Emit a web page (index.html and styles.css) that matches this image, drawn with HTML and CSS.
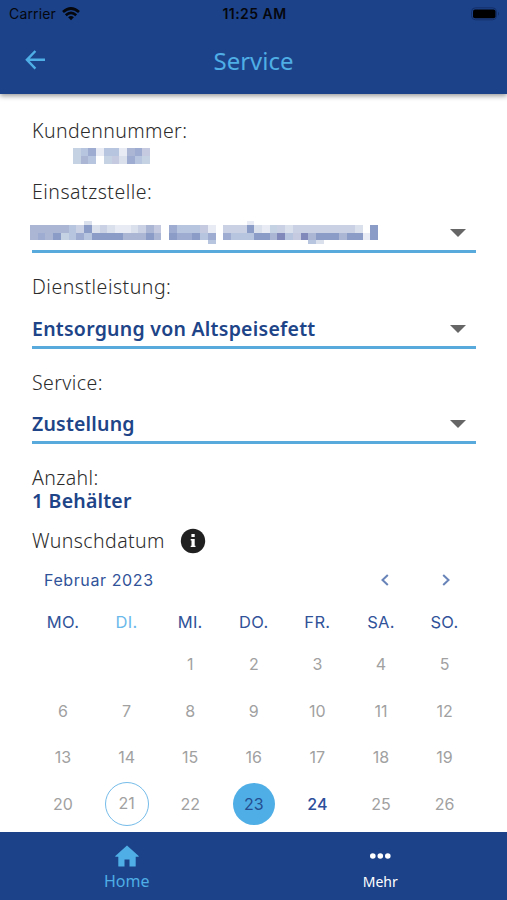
FILE: index.html
```html
<!DOCTYPE html>
<html lang="de">
<head>
<meta charset="utf-8">
<meta name="viewport" content="width=device-width, initial-scale=1">
<title>Service</title>
<link rel="stylesheet" href="styles.css">
</head>
<body>
<div class="app">
  <header class="header">
    <div class="status">
      <div class="carrier"><span>Carrier</span>
        <svg width="18" height="14" viewBox="0 0 18 14" fill="none" stroke="#05070d" stroke-width="2.7"><path d="M1 5Q9-2 17 5M3.8 8.2Q9 3.7 14.2 8.2"/><path d="M6.1 10.3Q9 7.9 11.9 10.3L9 13.2Z" fill="#05070d" stroke="none"/></svg>
      </div>
      <span class="time">11:25 AM</span>
      <svg class="battery" width="29" height="14" viewBox="0 0 29 14"><rect x=".5" y=".8" width="25" height="12" rx="4" fill="none" stroke="#14306a"/><rect x="2" y="2.5" width="22.5" height="8.8" rx="2" fill="#000"/><path d="M27 4.8q2 2 0 4z" fill="#14306a"/></svg>
    </div>
    <div class="titlebar">
      <svg class="back" width="22" height="22" viewBox="0 0 22 22" fill="none" stroke="#4faee5" stroke-width="2.4"><path d="M10.4 2 1.9 10.8l8.5 8.8M2 10.8H20"/></svg>
      <h1 class="title">Service</h1>
    </div>
  </header>
  <main class="content">
    <div class="label">Kundennummer:</div>
    <svg class="mosaic m-kunde" width="77" height="16" viewBox="0 0 10 2" preserveAspectRatio="none" shape-rendering="crispEdges" data-rows="bdg1dd1fgc|bfd0bc2gdb"></svg>
    <div class="label l-einsatz">Einsatzstelle:</div>
    <div class="select s-einsatz">
      <svg class="mosaic m-einsatz" width="348" height="23" viewBox="0 .5 45 3" preserveAspectRatio="none" shape-rendering="crispEdges" data-rows="000000020000000000000000000010000000000000000|fffffd3h2321123fc0gdddc10333h21b323333333320h|fgfhbdgdhhhhfffhf0hgghdg0gdddhhfidcifhhhfhh1h|00000000000000000000000d000000000000d20000000"></svg>
      <i class="caret"></i>
    </div>
    <div class="label l-dienst">Dienstleistung:</div>
    <div class="select"><b class="value v-dienst">Entsorgung von Altspeisefett</b><i class="caret"></i></div>
    <div class="label l-service">Service:</div>
    <div class="select"><b class="value">Zustellung</b><i class="caret"></i></div>
    <div class="label l-anzahl">Anzahl:</div>
    <b class="value v-anzahl">1 Behälter</b>
    <div class="date-label"><span class="label">Wunschdatum</span>
      <svg width="26" height="26" viewBox="0 0 26 26"><circle cx="13" cy="13" r="12.2" fill="#202020"/><path d="M11.4 6h3.3v3h-3.3zM10.7 11h4v6.7h.8V19h-4.8v-1.3h.8v-5.2h-.8z" fill="#fff"/></svg>
    </div>
    <section class="calendar">
      <div class="month"><span>Februar 2023</span>
        <div class="arrows"><svg width="10" height="14" viewBox="0 0 10 14"><path d="M7.8 2 2.5 7l5.3 5"/></svg><svg width="10" height="14" viewBox="0 0 10 14"><path d="m2.2 2 5.3 5-5.3 5"/></svg></div>
      </div>
      <div class="weekdays"><span>MO.</span><span class="now">DI.</span><span>MI.</span><span>DO.</span><span>FR.</span><span>SA.</span><span>SO.</span></div>
      <div class="days">
        <span></span><span></span><span>1</span><span>2</span><span>3</span><span>4</span><span>5</span>
        <span>6</span><span>7</span><span>8</span><span>9</span><span>10</span><span>11</span><span>12</span>
        <span>13</span><span>14</span><span>15</span><span>16</span><span>17</span><span>18</span><span>19</span>
        <span>20</span><span class="today">21</span><span>22</span><span class="selected">23</span><span class="open">24</span><span>25</span><span>26</span>
      </div>
    </section>
  </main>
  <nav class="tabs">
    <a class="tab home"><svg width="24" height="22" viewBox="0 0 24 22"><path d="M12 .5 23.7 11v.8h-3V21q0 .5-.5.5h-5.7v-7h-5v7H3.8q-.5 0-.5-.5v-9.2h-3V11z" fill="#4faee5"/></svg><span>Home</span></a>
    <a class="tab more"><svg width="24" height="22" viewBox="0 0 24 22" fill="#fff"><circle cx="4.8" cy="11" r="2.8"/><circle cx="12.3" cy="11" r="2.8"/><circle cx="19.8" cy="11" r="2.8"/></svg><span>Mehr</span></a>
  </nav>
</div>
<script src="mosaic.js"></script>
</body>
</html>
```
FILE: styles.css
```css
* { box-sizing: border-box; }
body { margin: 0; background: #fff; }
.app { width: 507px; height: 900px; display: flex; flex-direction: column; overflow: hidden; font-family: "Noto Sans", sans-serif; color: #2b2b2b; }
.header { height: 94px; flex: none; background: #1c4289; box-shadow: 0 2px 5px rgba(0,0,0,.4); }
.status { height: 28px; display: grid; grid-template-columns: 1fr auto 1fr; align-items: center; padding: 0 7px 0 9px; font: 14px/28px Inter, sans-serif; color: #05070d; }
.carrier { display: flex; align-items: center; gap: 6px; letter-spacing: .15px; }
.time { font-weight: 600; font-size: 14px; letter-spacing: .45px; }
.battery { justify-self: end; margin-top: -1px; }
.titlebar { height: 66px; display: grid; grid-template-columns: 60px 1fr 60px; align-items: center; }
.back { margin-left: 25px; margin-top: -3px; }
.title { margin: 0; text-align: center; font: 400 24px/66px "Noto Sans", sans-serif; color: #4faee5; }
.content { flex: 1; min-height: 0; padding: 24px 31px 0 32px; display: flex; flex-direction: column; overflow: hidden; }
.label { font-size: 19.5px; line-height: 26px; font-weight: 350; letter-spacing: .4px; white-space: nowrap; flex: none; }
.mosaic { display: block; flex: none; }
.m-kunde { margin: 4px 0 0 41px; }
.l-einsatz { margin-top: 15px; letter-spacing: .5px; }
.select { height: 42px; margin-top: 6px; padding: 4px 10px 0 0; border-bottom: 3px solid #58aadc; display: flex; align-items: center; justify-content: space-between; flex: none; }
.s-einsatz { height: 47px; margin-top: 1px; padding-top: 9px; }
.m-einsatz { margin: 0 0 0 -2px; }
.caret { border: 8px solid transparent; border-top-color: #666; border-bottom: 0; }
.value { font-size: 19.5px; line-height: 25px; font-weight: 600; letter-spacing: .2px; color: #204488; white-space: nowrap; flex: none; }
.v-dienst { letter-spacing: .25px; }
.l-dienst { margin-top: 21px; letter-spacing: .5px; }
.l-dienst + .select { margin-top: 7px; }
.l-service { margin-top: 21px; }
.l-anzahl { margin-top: 22px; line-height: 23px; }
.v-anzahl { line-height: 24px; }
.date-label { display: flex; align-items: center; gap: 15px; height: 28px; margin-top: 14px; flex: none; }
.calendar { width: 444px; font-family: Inter, sans-serif; font-size: 16px; color: #315399; }
.month { display: flex; justify-content: space-between; align-items: center; height: 48px; padding: 1px 25px 0 12px; letter-spacing: .6px; }
.arrows { display: flex; gap: 51px; }
.arrows svg { fill: none; stroke: #6884b8; stroke-width: 2; }
.weekdays, .days { display: grid; grid-template-columns: repeat(7, 63.6px); text-align: center; margin-left: -.8px; }
.weekdays { height: 38px; line-height: 38px; font-size: 16.5px; letter-spacing: .3px; }
.now { color: #6bb9eb; }
.days { grid-auto-rows: 46.8px; margin-top: -.5px; color: #a1a1a1; place-items: center; }
.today, .selected { width: 44px; height: 44px; line-height: 41px; border-radius: 50%; border: 1.5px solid #75bce9; }
.selected { width: 42px; height: 42px; line-height: 42px; border: 0; background: #4faee5; color: #244e91; }
.open { color: #2c4e9b; font-weight: 500; }
.tabs { height: 68px; flex: none; display: grid; grid-template-columns: 1fr 1fr; background: #1c4289; }
.tab { display: flex; flex-direction: column; align-items: center; padding-top: 13px; font-size: 14px; line-height: 24px; color: #fff; }
.tab span { margin-top: 3px; }
.home { color: #4faee5; font-size: 16px; }
.home span { margin-top: 2px; }
```
FILE: mosaic.js
```js
const tones = {1:'#e8ebf4',2:'#dbe0ed',3:'#cbd1e4',b:'#c5d2e3',c:'#c5cae1',d:'#b7c5de',f:'#abb6d5',g:'#9dacd0',h:'#8b9cc6',i:'#8189ba'};
document.querySelectorAll('.mosaic').forEach(svg => {
  svg.dataset.rows.split('|').forEach((row, y) => {
    [...row].forEach((key, x) => {
      if (!tones[key]) return;
      const r = document.createElementNS('http://www.w3.org/2000/svg', 'rect');
      Object.entries({x, y, width: 1, height: 1, fill: tones[key]}).forEach(([k, v]) => r.setAttribute(k, v));
      svg.append(r);
    });
  });
});
```
